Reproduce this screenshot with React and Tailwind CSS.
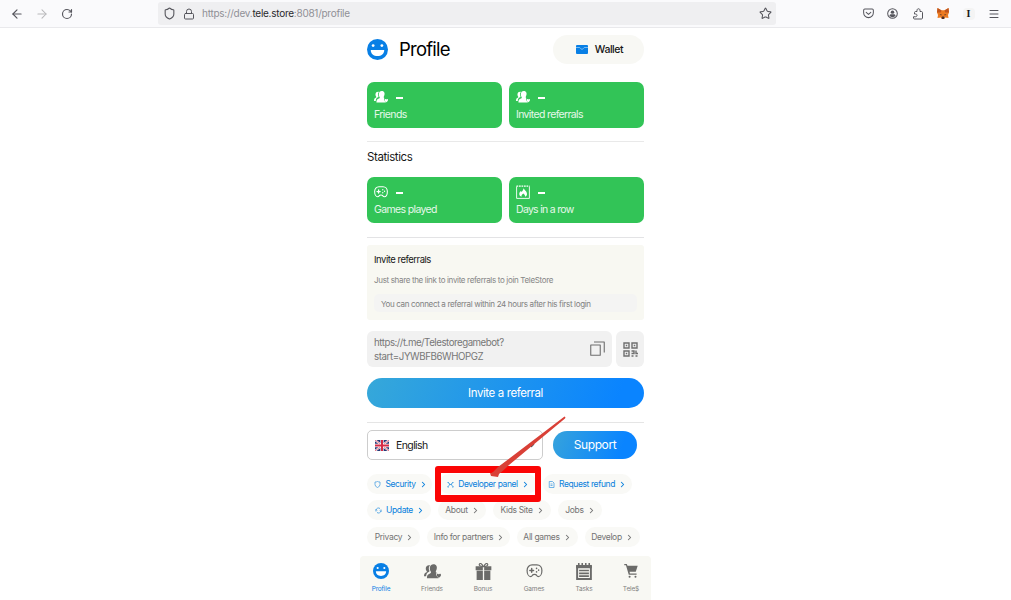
import React from "react";
import { ArrowLeft, ArrowRight, RotateCw, Shield, Lock, Star, Menu, ChevronRight, ChevronDown } from "lucide-react";

function Smile({ className }) {
  return (
    <svg viewBox="0 0 24 24" className={className}>
      <circle cx="12" cy="12" r="12" fill="#087fe5" />
      <circle cx="7" cy="7.5" r="1.6" fill="#fff" />
      <circle cx="17" cy="7.5" r="1.6" fill="#fff" />
      <path d="M4.3 12.5h15.400c0 4.500-3.400 7-7.700 7s-7.700-2.500-7.700-7Z" fill="#fff" />
    </svg>
  );
}

function Friends({ className }) {
  return (
    <svg viewBox="0 0 28 24" className={className} fill="currentColor">
      <path d="M8 1.500c1 0 1.500.2 2 .6C7.700 4 7.400 7 8.600 9.800c.7 1.500.4 2.200-1 2.900C4.500 14.200 3.800 16.500 3.500 20H0c0-4.500 1.500-5.500 4.200-6.800.7-.4.700-1.200.2-1.900C2 8.300 2.300 1.500 8 1.500Z" />
      <path d="M15.500 0c5.200 0 6.600 4.500 5.200 8.600-.5 1.600-1.300 2.700-1.300 3.900 0 1 .7 1.300 1.600 1.700-1.600 1.300-1.400 4.200.7 6.200l2.300 2.600H4.800c0-5 1.600-6.700 5.100-7.900 1.900-.7 2-1.700 1.200-3.100C8.200 7.500 9.500 0 15.500 0Z" />
      <path d="M24.500 17c1-2 3.500-1.100 3.500.8 0 1.700-1.500 3-3.500 4.700-2-1.700-3.500-3-3.500-4.700 0-1.900 2.500-2.800 3.500-.8Z" />
    </svg>
  );
}

function Gamepad({ className }) {
  return (
    <svg viewBox="0 0 28 24" className={className} fill="none" stroke="currentColor" strokeWidth="2.100" strokeLinecap="round">
      <path d="M10 1.500h8c5.200 0 8.700 4.200 8.700 9.500 0 6-2.700 10.500-6.200 10.500-2.500 0-2.700-2.500-4.300-3.200-1.200-.5-3.200-.5-4.400 0-1.600.7-1.800 3.200-4.300 3.200-3.500 0-6.200-4.500-6.200-10.500 0-5.300 3.500-9.500 8.700-9.500Z" />
      <path d="M6 11h6.400M9.200 7.800v6.400" strokeWidth="2.500" />
      <path d="M17.500 7.500h.1M17.500 13.500h.1M21 10.500h.1" strokeWidth="2.600" />
    </svg>
  );
}

function Flame({ className }) {
  return (
    <svg viewBox="0 0 28 28" className={className}>
      <path d="M1.200 3v23.800h25.600V3" fill="none" stroke="currentColor" strokeWidth="1.800" />
      <path d="M1 2.200h26" stroke="currentColor" strokeWidth="2.400" strokeDasharray="3.500 1.500" />
      <path d="M15 6c1 4 7 6 7 12 0 2.500-1.500 4.500-4 5.500.5-2.600-.9-4.500-3.500-6.500-2.400 2-4 3.900-3.500 6.500C8.500 22.500 6.500 20.500 6.500 18c0-2.500 1.500-4.800 3.500-6l1 2C13 12 15 9.500 15 6Z" fill="currentColor" />
    </svg>
  );
}

function Gift({ className }) {
  return (
    <svg viewBox="0 0 24 26" className={className} fill="currentColor">
      <path d="M0 5h11v6H0zM13 5h11v6H13zM1.500 12H11V26H1.500zM13 12h9.500V26H13z" />
      <path d="M11.500 5.500C10.500 2 7.500-.3 6 1.300S6.500 5.500 11.500 5.500ZM12.500 5.500c1-3.500 4-5.800 5.500-4.200S17.500 5.500 12.500 5.500Z" fill="none" stroke="currentColor" strokeWidth="1.800" />
    </svg>
  );
}

function Tasks({ className }) {
  return (
    <svg viewBox="0 0 24 26" className={className} fill="none" stroke="currentColor">
      <path d="M1.500 4v20.500h21V4" strokeWidth="3" />
      <path d="M0 5.500h24" strokeWidth="5" />
      <path d="M4 0v4M9.300 0v4M14.700 0v4M20 0v4" strokeWidth="2.400" />
      <path d="M4.500 11.500h15M4.500 15.800h15M4.500 20h15" strokeWidth="2.500" />
    </svg>
  );
}

function Cart({ className }) {
  return (
    <svg viewBox="0 0 24 25" className={className} fill="currentColor">
      <path d="M0 0h4.500l1.200 3H24l-3.500 11H9.500L10 17h12v2.200H8L3 2.200H0Z" />
      <circle cx="9.500" cy="22.700" r="1.800" />
      <circle cx="20" cy="22.700" r="1.800" />
    </svg>
  );
}

function Pocket() {
  return (
    <svg viewBox="0 0 12 12" className="size-[11px]" fill="none" stroke="#55555c" strokeWidth="1.100" strokeLinecap="round" strokeLinejoin="round">
      <path d="M2 1.200h8c.8 0 1.300.5 1.300 1.300v2.700a5.300 5.300 0 0 1-10.600 0V2.500c0-.8.5-1.300 1.300-1.300ZM3.500 4.800 6 7l2.500-2.200" />
    </svg>
  );
}

function Account() {
  return (
    <svg viewBox="0 0 24 24" className="size-[11px]">
      <circle cx="12" cy="12" r="10.500" fill="none" stroke="#55555c" strokeWidth="2.200" />
      <circle cx="12" cy="9" r="3.800" fill="#55555c" />
      <path d="M5.500 17c0-3 2.500-3.500 4-3.500h5c1.500 0 4 .5 4 3.500-1.500 1.800-4 3-6.500 3s-5-1.200-6.500-3Z" fill="#55555c" />
    </svg>
  );
}

function Extension() {
  return (
    <svg viewBox="0 0 24 24" className="size-3" fill="none" stroke="#55555c" strokeWidth="2" strokeLinejoin="round">
      <path d="M5 22h14c1 0 2-1 2-2V9c0-1-1-2-2-2h-3V4.500c0-4-6-4-6 0V7H7C6 7 5 8 5 9v3h2c4 0 4 5.500 0 5.500H3V20c0 1 1 2 2 2Z" />
    </svg>
  );
}

function Fox() {
  return (
    <svg viewBox="0 0 24 22" className="h-[11px] w-3">
      <path d="m1 0 8 4.500h6L23 0l1 9-2 5 1 6-6.500-1L14 22h-4l-2.500-3L1 20l1-6-2-5Z" fill="#ec7a20" />
      <path d="m1 0 8 5-1.500 4L0 9ZM23 0l-8 5 1.500 4L24 9Z" fill="#bf541d" />
      <path d="m5 12 5 1.500-2 1.500ZM19 12l-5 1.500 2 1.500ZM10 17h4l1 3-1 2h-4l-1-2Z" fill="#4b302b" />
    </svg>
  );
}

function Flag() {
  return (
    <svg viewBox="0 0 28 20" className="h-[11px] w-[14px]" preserveAspectRatio="none">
      <path fill="#253876" d="M0 0h28v20H0z" />
      <path d="m0 0 28 20M28 0 0 20" stroke="#fff" strokeWidth="3.500" />
      <path d="m0 0 28 20M28 0 0 20" stroke="#d52b45" strokeWidth="1.300" />
      <path d="M14 0v20M0 10h28" stroke="#fff" strokeWidth="6.500" />
      <path d="M14 0v20M0 10h28" stroke="#d52b45" strokeWidth="4" />
    </svg>
  );
}

function Qr() {
  return (
    <svg viewBox="0 0 30 30" className="size-[15px]" fill="none" stroke="#6f6f6f" strokeWidth="2.800">
      <path d="M2 2h10v10H2zM18 2h10v10H18zM2 18h10v10H2z" />
      <path d="M5.500 7h3M21.500 7h3M5.500 23h3M17 18h5v5h-5M26 17v6h4M17 28h4M25 28h4" />
    </svg>
  );
}

function Wallet() {
  return (
    <svg viewBox="0 0 24 18" className="h-[9px] w-3">
      <path d="M2 0h20q2 0 2 2v14q0 2-2 2H2q-2 0-2-2V2q0-2 2-2Z" fill="#087fe5" />
      <path d="M0 5h7c1.500 0 2 3.500 5 3.500S15.500 5 17 5h7" fill="none" stroke="#b7dbf8" strokeWidth="1.300" />
    </svg>
  );
}

function StatCard({ icon, label, labelClass }) {
  return (
    <div className="flex h-[46px] w-[135px] flex-col rounded-[7px] bg-[#32c457] px-[7px] pt-[7px] text-white">
      <div className="flex h-[15px] items-center gap-2">
        {icon}
        <span className="mt-[2px] h-[2px] w-[7px] bg-white" />
      </div>
      <span className={`mt-[2px] text-[10.500px] leading-[17px] text-[#e6f8ea] ${labelClass}`}>{label}</span>
    </div>
  );
}

function Chip({ children, icon, width, blue }) {
  return (
    <div className={`flex h-5 shrink-0 items-center justify-center whitespace-nowrap rounded-full bg-[#f9f9f6] text-[8.500px] ${width} ${blue ? "tracking-[-0.400px] text-[#087fdc]" : "tracking-[-0.330px] text-[#737373]"}`}>
      {icon && <span className="mr-[4px] opacity-75">{icon}</span>}
      <span>{children}</span>
      <ChevronRight className="ml-[3px] size-[9px]" strokeWidth={2.800} />
    </div>
  );
}

function NavItem({ icon, label, width, active }) {
  return (
    <div className={`flex flex-col items-center ${width} ${active ? "text-[#087fe5]" : "text-[#6b6b69]"}`}>
      <span className="flex h-[18px] items-center">{icon}</span>
      <span className={`mt-[4px] text-[6.500px] leading-[10px] tracking-[-0.150px] ${active ? "" : "text-[#808080]"}`}>{label}</span>
    </div>
  );
}

const small = "size-[7px]";

function ShieldMark() {
  return <svg viewBox="0 0 14 14" className={small} fill="none" stroke="currentColor" strokeWidth="1.500"><path d="M2 2q3 0 5-1 2 1 5 1v5q0 4-5 6-5-2-5-6Z" /></svg>;
}
function ToolsMark() {
  return <svg viewBox="0 0 14 14" className={small} fill="none" stroke="currentColor" strokeWidth="1.700"><path d="m1 12 5-5L2 2m11 10L8 7l4-5M1 2l3 3m9-3-3 3M4 7h6M1 12h3m6 0h3" /></svg>;
}
function DocMark() {
  return <svg viewBox="0 0 14 14" className={small} fill="none" stroke="currentColor" strokeWidth="1.500"><path d="M2.500 1H9l3 3v9H2.500ZM5 6h4M5 9h4" /></svg>;
}
function UpdateMark() {
  return <svg viewBox="0 0 14 14" className={small} fill="none" stroke="currentColor" strokeWidth="1.700"><path d="M2 9V7a5 5 0 0 1 8-4M12 5v2a5 5 0 0 1-8 4M0 7l2-2 2 2m6 0 2 2 2-2" /></svg>;
}

export default function App() {
  return (
    <div className="relative flex h-[600px] w-[1011px] flex-col overflow-hidden bg-white font-['Inter',sans-serif] text-[#171717]">
      <header className="flex h-7 shrink-0 items-center border-b border-[#e9e9ec] bg-[#fafafc] text-[#55555c]">
        <div className="flex w-[158px] items-center pl-[10px]">
          <ArrowLeft className="size-[14px]" strokeWidth={2} />
          <ArrowRight className="ml-[11px] size-[14px] text-[#b7b7ba]" strokeWidth={1.800} />
          <RotateCw className="ml-[12px] size-3" strokeWidth={2.300} />
        </div>
        <div className="flex h-[23px] w-[618px] items-center rounded-[3px] bg-[#efeff1] pr-[4px] pl-[5px]">
          <Shield className="size-[13px]" strokeWidth={2} />
          <Lock className="ml-[7px] size-3" strokeWidth={2} />
          <span className="ml-[7px] flex-1 text-[10px] tracking-[-0.260px] text-[#909096]">
            https://dev.<span className="text-[#29292d]">tele.store</span>:8081/profile
          </span>
          <Star className="size-[13px]" strokeWidth={1.900} />
        </div>
        <div className="flex flex-1 items-center justify-between pr-[11px] pl-[87px]">
          <Pocket />
          <Account />
          <Extension />
          <Fox />
          <span className="flex size-3 items-center justify-center rounded-sm bg-[#f4f4f4] font-['Liberation_Serif',serif] text-[10px] font-bold text-[#161616]">I</span>
          <Menu className="size-3" strokeWidth={2} />
        </div>
      </header>

      <main className="ml-[367px] flex w-[277px] flex-1 flex-col">
        <div className="mt-[7px] flex h-[29px] items-center justify-between">
          <div className="flex items-center">
            <Smile className="-mt-px size-[21px]" />
            <h1 className="-mt-px ml-[11px] text-[18.500px] leading-6 tracking-[-0.780px] text-black">Profile</h1>
          </div>
          <button className="flex h-[29px] w-[91px] items-center justify-center gap-[7px] rounded-full bg-[#f8f8f4] pl-[2px] text-[10.500px] font-medium tracking-[-0.450px]">
            <Wallet />Wallet
          </button>
        </div>

        <div className="mt-[18px] flex gap-[7px]">
          <StatCard icon={<Friends className="h-3 w-[14px]" />} label="Friends" labelClass="tracking-[-0.580px]" />
          <StatCard icon={<Friends className="h-3 w-[14px]" />} label="Invited referrals" labelClass="tracking-[-0.640px]" />
        </div>
        <div className="mt-[13px] h-px shrink-0 bg-[#e9e9e9]" />
        <h2 className="mt-[7px] text-[11.500px] leading-4 tracking-[-0.400px]">Statistics</h2>
        <div className="mt-[12px] flex gap-[7px]">
          <StatCard icon={<Gamepad className="h-3 w-[14px]" />} label="Games played" labelClass="tracking-[-0.640px]" />
          <StatCard icon={<Flame className="size-[14px]" />} label="Days in a row" labelClass="tracking-[-0.700px]" />
        </div>
        <div className="mt-[14px] h-px shrink-0 bg-[#e3e3e5]" />

        <section className="mt-[7px] flex h-[75px] shrink-0 flex-col rounded-[3px] bg-[#f8f8f2] px-[7px] pt-[7px]">
          <h3 className="text-[9.500px] leading-[15px] tracking-[-0.480px]">Invite referrals</h3>
          <p className="mt-[7px] text-[8px] leading-3 tracking-[-0.335px] text-[#858585]">Just share the link to invite referrals to join TeleStore</p>
          <p className="mt-[8px] h-[18px] rounded-[5px] bg-[#f4f4f3] px-[7px] text-[8px] leading-[20px] tracking-[-0.330px] text-[#808080]">You can connect a referral within 24 hours after his first login</p>
        </section>

        <div className="mt-[11px] flex h-9 shrink-0 gap-1">
          <div className="flex w-[245px] items-center justify-between rounded-[6px] bg-[#f1f1f1] pr-[7px] pl-[7px]">
            <span className="pt-px text-[9.700px] leading-[14px] tracking-[-0.470px] text-[#777]">https://t.me/Telestoregamebot?<br /><span className="tracking-[-0.400px]">start=JYWBFB6WHOPGZ</span></span>
            <svg viewBox="0 0 30 30" className="-mt-px size-[15px]" fill="none" stroke="#6e6e6e" strokeWidth="2.200" strokeLinejoin="round"><path d="M1.500 8h19v20.500h-19zM8 2h20.500v21" /></svg>
          </div>
          <div className="flex w-7 items-center justify-center rounded-[6px] bg-[#f1f1f1]"><Qr /></div>
        </div>
        <button className="mt-[11px] h-[30px] shrink-0 rounded-full bg-linear-[110deg,#36a8d9,#0a84ff_90%] pt-px text-[11.500px] tracking-[-0.400px] text-white">Invite a referral</button>
        <div className="mt-[14px] h-px shrink-0 bg-[#e5e5e5]" />

        <div className="mt-[7px] flex h-[30px] shrink-0 items-center gap-[10px]">
          <div className="flex h-[30px] w-[176px] items-center rounded-[5px] border border-[#cdcdcd] pr-[6px] pl-[7px]">
            <Flag /><span className="ml-[7px] flex-1 pt-px text-[10.500px] tracking-[-0.600px]">English</span>
            <ChevronDown className="size-[9px] text-[#3c5960]" strokeWidth={3} />
          </div>
          <button className="h-7 w-[84px] rounded-full bg-linear-[110deg,#36a3dc,#0a84ff_80%] text-[12px] tracking-[-0.400px] text-white">Support</button>
        </div>

        <div className="mt-[14px] flex shrink-0">
          <Chip blue width="w-[65px] pl-[3px]" icon={<ShieldMark />}>Security</Chip>
          <Chip blue width="ml-[7px] w-[98px] pl-[1px]" icon={<ToolsMark />}>Developer panel</Chip>
          <Chip blue width="ml-[6px] w-[89px]" icon={<DocMark />}>Request refund</Chip>
        </div>
        <div className="mt-[6px] flex shrink-0 gap-[7px]">
          <Chip blue width="w-[64px] pl-[2px]" icon={<UpdateMark />}>Update</Chip>
          <Chip width="w-[48px] pl-[1px]">About</Chip>
          <Chip width="w-[58px] pl-[1px]">Kids Site</Chip>
          <Chip width="w-[44px] pl-[1px]">Jobs</Chip>
        </div>
        <div className="mt-[7px] flex shrink-0 gap-[7px]">
          <Chip width="w-[53px] pl-[2px]">Privacy</Chip>
          <Chip width="w-[83px] pl-[2px]">Info for partners</Chip>
          <Chip width="w-[61px]">All games</Chip>
          <Chip width="w-[55px]">Develop</Chip>
        </div>
      </main>

      <nav className="ml-[360px] flex h-11 w-[291px] shrink-0 rounded-t-[4px] bg-[#f8f8f3] pt-[6px]">
        <NavItem active width="w-[42px]" icon={<Smile className="size-[16px]" />} label="Profile" />
        <NavItem width="w-[60px]" icon={<Friends className="h-[15px] w-[17px]" />} label="Friends" />
        <NavItem width="w-[42px]" icon={<Gift className="h-[17px] w-[17px]" />} label="Bonus" />
        <NavItem width="w-[60px]" icon={<Gamepad className="h-[14px] w-[17px]" />} label="Games" />
        <NavItem width="w-[40px]" icon={<Tasks className="h-[17px] w-[16px]" />} label="Tasks" />
        <NavItem width="w-[47px] pl-[7px]" icon={<Cart className="h-[14px] w-[14px]" />} label="Tele$" />
      </nav>

      <div className="absolute top-[466px] left-[435px] h-9 w-[106px] rounded-[3px] border-[7px] border-x-[6px] border-[#fb0505]" />
      <svg viewBox="0 0 80 64" className="absolute top-[415px] left-[488px] h-16 w-20">
        <path d="M76.500 1.500q1.500.5.500 2L21 50q-6 6-10 9l-7 1q-2-2 1-3l5-5Z" fill="#d94037" />
        <path d="m2 58 9 1-1 3-7-1Z" fill="#d94037" />
      </svg>
    </div>
  );
}
